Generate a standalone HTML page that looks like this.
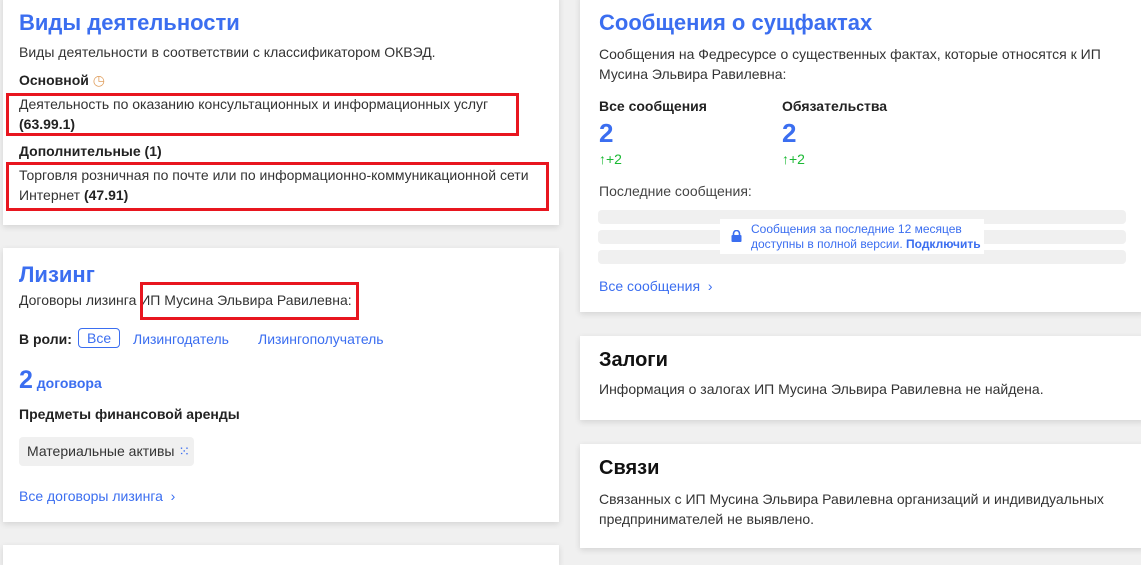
<!DOCTYPE html>
<html><head><meta charset="utf-8"><style>
*{margin:0;padding:0;box-sizing:border-box}
body{width:1141px;height:551px;background:#f0f0f0;font-family:"Liberation Sans",sans-serif;color:#333;font-size:14px;position:relative;overflow:hidden}
.card{position:absolute;background:#fff;box-shadow:0 2px 6px rgba(0,0,0,.12)}
.a{position:absolute;white-space:nowrap}
.t{font-size:22px;font-weight:bold;color:#3b6ef0}
.h{font-size:20px;font-weight:bold;color:#111}
.b{font-weight:bold;color:#222}
.blue{color:#3b6ef0}
.red{position:absolute;border:3px solid #e8161f}
.bar{position:absolute;left:598px;width:528px;height:14px;background:#f0f0f0;border-radius:4px}
</style></head><body>
<div class="card" style="left:3px;top:-5px;width:556px;height:230px"></div>
<div class="card" style="left:3px;top:248px;width:556px;height:274px"></div>
<div class="card" style="left:3px;top:545px;width:556px;height:20px"></div>
<div class="card" style="left:580px;top:-5px;width:565px;height:317px"></div>
<div class="card" style="left:580px;top:336px;width:565px;height:84px"></div>
<div class="card" style="left:580px;top:444px;width:565px;height:104px"></div>

<div class="a t" style="left:19px;top:10px">Виды деятельности</div>
<div class="a" style="left:19px;top:44px">Виды деятельности в соответствии с классификатором ОКВЭД.</div>
<div class="a b" style="left:19px;top:72px">Основной <span style="color:#e0a060;font-weight:normal">◷</span></div>
<div class="a" style="left:19px;top:94px;line-height:20px">Деятельность по оказанию консультационных и информационных услуг<br><span class="b">(63.99.1)</span></div>
<div class="red" style="left:6px;top:93px;width:513px;height:43px"></div>
<div class="a b" style="left:19px;top:143px">Дополнительные (1)</div>
<div class="a" style="left:19px;top:165px;line-height:20px">Торговля розничная по почте или по информационно-коммуникационной сети<br>Интернет <span class="b">(47.91)</span></div>
<div class="red" style="left:6px;top:162px;width:543px;height:49px"></div>

<div class="a t" style="left:19px;top:262px">Лизинг</div>
<div class="a" style="left:19px;top:292px">Договоры лизинга ИП Мусина Эльвира Равилевна:</div>
<div class="red" style="left:140px;top:282px;width:219px;height:38px"></div>
<div class="a b" style="left:19px;top:331px">В роли:</div>
<div class="a blue" style="left:78px;top:328px;border:1px solid #3b6ef0;border-radius:4px;padding:1px 8px">Все</div>
<div class="a blue" style="left:133px;top:331px">Лизингодатель</div>
<div class="a blue" style="left:258px;top:331px">Лизингополучатель</div>
<div class="a blue" style="left:19px;top:366px"><span style="font-size:25px;font-weight:bold">2</span> <span style="font-weight:bold">договора</span></div>
<div class="a b" style="left:19px;top:406px">Предметы финансовой аренды</div>
<div class="a" style="left:19px;top:437px;background:#f0f0f0;border-radius:4px;padding:6px 4px 6px 8px">Материальные активы <span class="blue">⁙</span></div>
<div class="a blue" style="left:19px;top:488px">Все договоры лизинга &nbsp;›</div>

<div class="a t" style="left:599px;top:10px">Сообщения о сущфактах</div>
<div class="a" style="left:599px;top:44px;line-height:20px">Сообщения на Федресурсе о существенных фактах, которые относятся к ИП<br>Мусина Эльвира Равилевна:</div>
<div class="a b" style="left:599px;top:98px">Все сообщения</div>
<div class="a b" style="left:782px;top:98px">Обязательства</div>
<div class="a blue" style="left:599px;top:118px;font-size:26px;font-weight:bold">2</div>
<div class="a blue" style="left:782px;top:118px;font-size:26px;font-weight:bold">2</div>
<div class="a" style="left:599px;top:151px;color:#1bb934">↑+2</div>
<div class="a" style="left:782px;top:151px;color:#1bb934">↑+2</div>
<div class="a" style="left:599px;top:183px;color:#444">Последние сообщения:</div>
<div class="bar" style="top:210px"></div>
<div class="bar" style="top:230px"></div>
<div class="bar" style="top:250px"></div>
<div class="a" style="left:720px;top:219px;width:264px;height:35px;background:#fff"></div>
<div class="a" style="left:731px;top:229px;width:11px;height:12px">
<svg width="11" height="12" viewBox="0 0 11 12"><path d="M2.5 5V3.5a3 3 0 0 1 6 0V5" fill="none" stroke="#3b6ef0" stroke-width="1.6"/><rect x="0.5" y="5" width="10" height="7" rx="1" fill="#3b6ef0"/></svg></div>
<div class="a blue" style="left:751px;top:222px;font-size:12px;line-height:15px">Сообщения за последние 12 месяцев<br>доступны в полной версии. <b>Подключить</b></div>
<div class="a blue" style="left:599px;top:278px">Все сообщения &nbsp;›</div>

<div class="a h" style="left:599px;top:349px">Залоги</div>
<div class="a" style="left:599px;top:381px">Информация о залогах ИП Мусина Эльвира Равилевна не найдена.</div>
<div class="a h" style="left:599px;top:457px">Связи</div>
<div class="a" style="left:599px;top:489px;line-height:20px">Связанных с ИП Мусина Эльвира Равилевна организаций и индивидуальных<br>предпринимателей не выявлено.</div>
</body></html>
